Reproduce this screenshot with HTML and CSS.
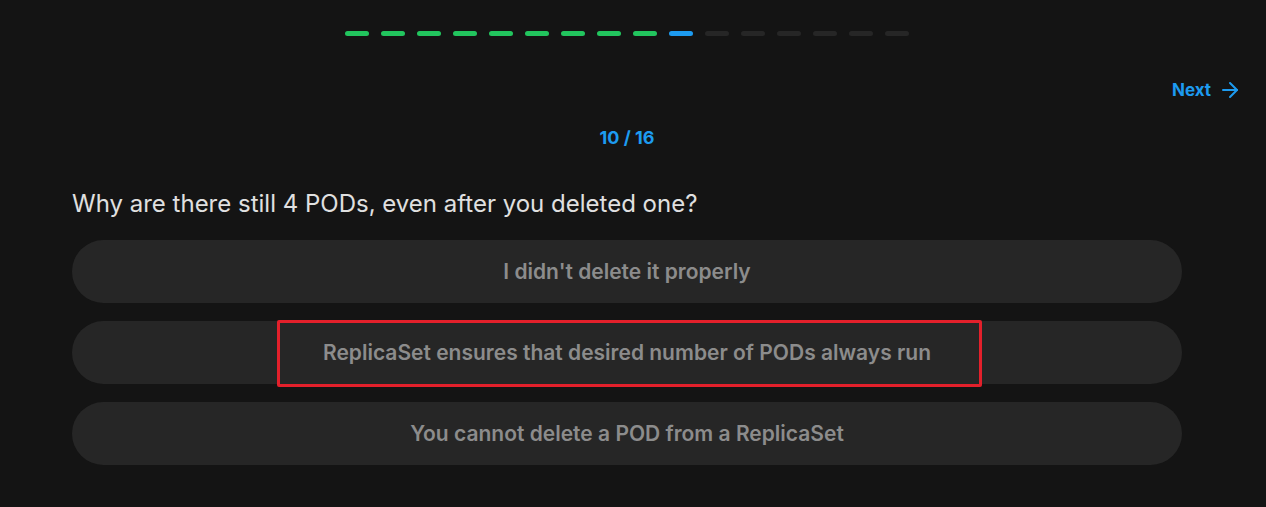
FILE: index.html
```html
<!DOCTYPE html>
<html lang="en">
<head>
  <meta charset="UTF-8">
  <meta name="viewport" content="width=device-width, initial-scale=1.0">
  <title>Quiz</title>
  <link rel="stylesheet" href="styles.css">
</head>
<body>
  <div class="quiz">
    <div class="progress">
      <span class="dash done"></span>
      <span class="dash done"></span>
      <span class="dash done"></span>
      <span class="dash done"></span>
      <span class="dash done"></span>
      <span class="dash done"></span>
      <span class="dash done"></span>
      <span class="dash done"></span>
      <span class="dash done"></span>
      <span class="dash current"></span>
      <span class="dash"></span>
      <span class="dash"></span>
      <span class="dash"></span>
      <span class="dash"></span>
      <span class="dash"></span>
      <span class="dash"></span>
    </div>
  </div>

  <div class="nav">
    <a class="next" href="#">Next
      <svg width="24" height="24" viewBox="0 0 24 24" fill="none" stroke="currentColor" stroke-width="2" stroke-linecap="round" stroke-linejoin="round"><path d="M5 12h14"/><path d="M12 5l7 7-7 7"/></svg>
    </a>
  </div>

  <div class="quiz">
    <div class="counter">10 / 16</div>
    <h2 class="question">Why are there still 4 PODs, even after you deleted one?</h2>
    <div class="answers">
      <button class="answer">I didn't delete it properly</button>
      <button class="answer">ReplicaSet ensures that desired number of PODs always run<span class="mark"></span></button>
      <button class="answer">You cannot delete a POD from a ReplicaSet</button>
    </div>
  </div>
</body>
</html>
```

FILE: styles.css
```css
body {
  margin: 0;
  background: #141414;
  color: #e5e5e5;
  font-family: Inter, 'Noto Sans', sans-serif;
}
.quiz {
  width: 1110px;
  margin-left: 72px;
}
.progress {
  display: flex;
  justify-content: center;
  gap: 12px;
  padding-top: 31px;
}
.dash {
  width: 24px;
  height: 5px;
  border-radius: 3px;
  background: #262626;
}
.dash.done {
  background: #22c55e;
}
.dash.current {
  background: #1d9bf0;
}
.nav {
  display: flex;
  justify-content: flex-end;
  padding-right: 24px;
  margin-top: 42px;
}
.next {
  display: flex;
  align-items: center;
  gap: 7px;
  color: #1d9bf0;
  font-size: 17px;
  font-weight: 700;
  text-decoration: none;
  line-height: 24px;
}
.counter {
  text-align: center;
  color: #1d9bf0;
  font-size: 18px;
  font-weight: 700;
  margin-top: 24px;
  line-height: 24px;
}
.question {
  margin: 39px 0 0;
  font-size: 24px;
  font-weight: 400;
  line-height: 30px;
  color: #e0e0e0;
}
.answers {
  display: flex;
  flex-direction: column;
  gap: 18px;
  margin-top: 21px;
}
.answer {
  position: relative;
  height: 63px;
  border: none;
  border-radius: 32px;
  background: #262626;
  color: #8c8c8c;
  font-family: inherit;
  font-size: 21px;
  font-weight: 600;
  cursor: pointer;
}
.mark {
  position: absolute;
  left: 205px;
  right: 200px;
  top: -1px;
  bottom: -3px;
  border: 3px solid #e3202b;
  border-radius: 2px;
  pointer-events: none;
}
```
